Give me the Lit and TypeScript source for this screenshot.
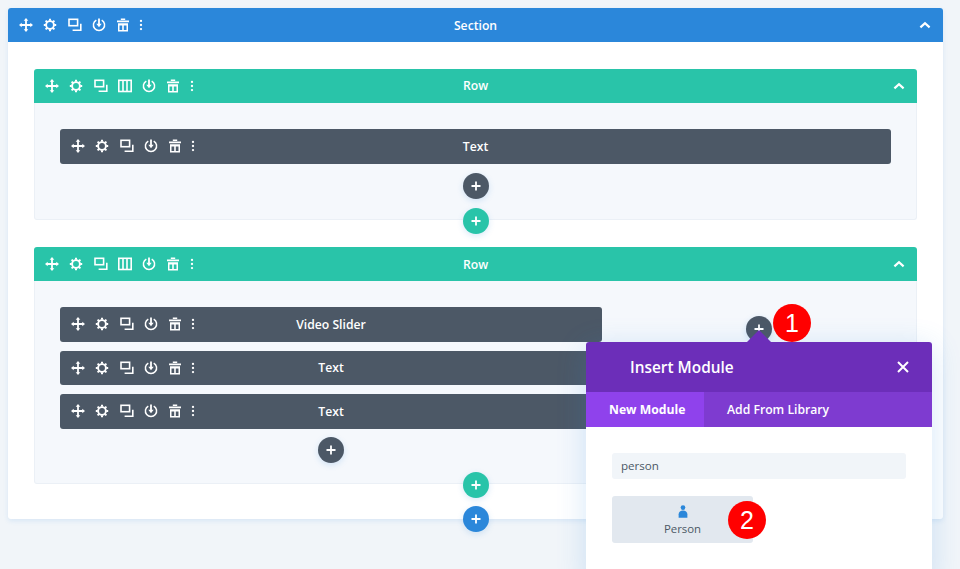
import { LitElement, html, css, svg } from "lit";
import { customElement } from "lit/decorators.js";

const paths: Record<string, unknown> = {
  move: svg`<path fill="currentColor" d="M7 0 9.3 2.7H7.9V6.1h3.4V4.7L14 7l-2.7 2.3V7.9H7.9v3.4h1.4L7 14l-2.3-2.7h1.4V7.9H2.7v1.4L0 7l2.7-2.3v1.4h3.4V2.7H4.7Z"/>`,
  gear: svg`<g stroke="currentColor" fill="none"><circle cx="7" cy="7" r="3.9" stroke-width="1.9"/><path stroke-width="2" d="M7 .8v2M7 11.2v2M.8 7h2M11.2 7h2M2.6 2.6l1.3 1.3M10.1 10.1l1.3 1.3M11.4 2.6l-1.3 1.3M3.9 10.1l-1.3 1.3"/></g>`,
  copy: svg`<g stroke="currentColor" fill="none" stroke-width="1.6"><rect x="1" y="1.3" width="8.6" height="6.4"/><path d="M4.6 12.2h8.2V5.8"/></g>`,
  cols: svg`<g stroke="currentColor" fill="none" stroke-width="1.6"><rect x=".8" y="1.3" width="12.4" height="11.2"/><path d="M5 1.3v11.2M9 1.3v11.2"/></g>`,
  power: svg`<g fill="none" stroke="currentColor" stroke-width="1.5"><path d="M4.3 2.1a5.6 5.6 0 1 0 5.4 0"/></g><path fill="currentColor" d="M6.1.6h1.8v5.2h1.8L7 9.2 4.3 5.8h1.8Z"/>`,
  trash: svg`<g fill="currentColor"><path d="M1 2.6h12v1.6H1ZM4.8.6h4.4v1.4H4.8Z"/><path fill-rule="evenodd" d="M2 5.2h10v8.2H2ZM3.5 7.6v4.4h2.7V7.6ZM7.8 7.6v4.4h2.7V7.6Z"/></g>`,
  dots: svg`<g fill="currentColor"><circle cx="7" cy="2.2" r="1.35"/><circle cx="7" cy="7" r="1.35"/><circle cx="7" cy="11.8" r="1.35"/></g>`,
};

const icon = (name: string) => html`<svg class="ic" viewBox="0 0 14 14" width="14" height="14">${paths[name]}</svg>`;

const plus = (cls: string) => html`<span class="plus ${cls}"><svg viewBox="0 0 12 12" width="12" height="12"><path d="M6 1.5v9M1.5 6h9" stroke="#fff" stroke-width="1.8" fill="none"/></svg></span>`;

@customElement("app-root")
export class AppRoot extends LitElement {
  static styles = css`
    :host { display: block; box-sizing: border-box; width: 960px; height: 569px; overflow: hidden; position: relative;
      background: #f1f5f9; padding: 8px 17px 0 8px; font-family: "Open Sans", "Noto Sans", sans-serif; }
    * { box-sizing: border-box; }
    .section { position: relative; height: 511px; background: #fff; border-radius: 3px; box-shadow: 0 2px 5px rgba(43,135,218,.12); }
    .bar { display: grid; grid-template-columns: 1fr auto 1fr; align-items: center; color: #fff; height: 34px; border-radius: 3px 3px 0 0; font-size: 12.2px; font-weight: 600; }
    .bar.blue { background: #2b87da; }
    .bar.green { background: #29c4a9; }
    .bar.dark { background: #4c5866; height: 34.6px; border-radius: 3px; }
    .tools { display: flex; align-items: center; padding-left: 6px; }
    .tool { width: 24.25px; display: flex; justify-content: center; align-items: center; }
    .tool.narrow { width: 12px; }
    .ic { display: block; }
    .chev { justify-self: end; margin-right: 12px; display: block; }
    .section-body { padding: 26.5px 26px 0; display: flex; flex-direction: column; gap: 27.5px; }
    .row { position: relative; }
    .row-body { background: #f5f8fc; border: 1px solid #ebf0f6; border-top: 0; padding: 26px 25px 21px; border-radius: 0 0 3px 3px; }
    .row-body.first { height: 117px; padding-top: 26.5px; }
    .row-body.second { height: 203px; }
    .col { display: flex; flex-direction: column; align-items: center; }
    .col .bar { width: 100%; }
    .col .bar + .bar { margin-top: 9px; }
    .grid { display: grid; grid-template-columns: 542px 264px; column-gap: 25px; }
    .plus { width: 26px; height: 26px; border-radius: 50%; display: flex; align-items: center; justify-content: center; flex: none;
      box-shadow: 0 2px 6px rgba(43,135,218,.18); }
    .plus.d { background: #4c5866; margin-top: 9px; }
    .plus.d.tight { margin-top: 8.4px; }
    .plus.g { background: #29c4a9; }
    .plus.b { background: #2b87da; }
    .edge { position: absolute; left: 50%; bottom: -14px; margin-left: -13px; z-index: 2; }
    .section > .edge { bottom: -13px; margin-left: -13px; }
    .popup { position: absolute; left: 586px; top: 342px; width: 346px; height: 240px; background: #fff; border-radius: 3px 3px 0 0; z-index: 5;
      box-shadow: 0 5px 30px rgba(43,135,218,.2); }
    .arrow { position: absolute; left: 161px; top: -12px; width: 0; height: 0; border-left: 12px solid transparent; border-right: 12px solid transparent; border-bottom: 12px solid #6c2eb9; }
    .head { height: 50px; background: #6c2eb9; color: #fff; font-size: 15.4px; font-weight: 600; display: flex; align-items: center; justify-content: space-between; padding: 0 23.5px 0 44px; border-radius: 3px 3px 0 0; }
    .head svg { display: block; }
    .tabs { height: 35px; background: #7e3bd0; display: flex; color: #fff; font-size: 12.2px; font-weight: 600; white-space: nowrap; }
    .tab { display: flex; align-items: center; padding: 0 23px; }
    .tab.on { background: #8f42ec; width: 118px; font-weight: 700; }
    .pbody { padding: 26px; }
    .search { height: 26px; background: #f1f5f9; border-radius: 3px; color: #4c5866; font-size: 11.6px; padding: 0 9px 1px; display: flex; align-items: center; }
    .tile { margin-top: 17px; width: 141px; height: 47px; background: #e2e8ef; border-radius: 3px; color: #4c5866; font-size: 11.4px; font-weight: 500; display: flex; flex-direction: column; align-items: center; padding-top: 9px; }
    .tile svg { display: block; margin-bottom: 3px; }
    .num { position: absolute; width: 38px; height: 38px; border-radius: 50%; background: #f00; color: #fff; z-index: 6;
      font-family: "Liberation Sans", Arial, sans-serif; font-size: 25px; display: flex; align-items: center; justify-content: center; }
    .n1 { left: 773px; top: 304px; }
    .n2 { left: 728px; top: 501px; }
  `;

  private bar(color: string, title: string, tools: string[]) {
    return html`<div class="bar ${color}">
      <div class="tools">${tools.map((t) => html`<span class="tool ${t === "dots" ? "narrow" : ""}">${icon(t)}</span>`)}</div>
      <span>${title}</span>
      ${color === "dark" ? html`<span></span>` : html`<svg class="chev" viewBox="0 0 12 8" width="12" height="8"><path d="M1.4 6.4 6 2.2l4.6 4.2" stroke="#fff" stroke-width="2.2" fill="none"/></svg>`}
    </div>`;
  }

  render() {
    const base = ["move", "gear", "copy", "power", "trash", "dots"];
    const rowT = ["move", "gear", "copy", "cols", "power", "trash", "dots"];
    return html`
      <div class="section">
        ${this.bar("blue", "Section", base)}
        <div class="section-body">
          <div class="row">
            ${this.bar("green", "Row", rowT)}
            <div class="row-body first">
              <div class="col">${this.bar("dark", "Text", base)}${plus("d")}</div>
            </div>
            ${plus("g edge")}
          </div>
          <div class="row">
            ${this.bar("green", "Row", rowT)}
            <div class="row-body second">
              <div class="grid">
                <div class="col">
                  ${this.bar("dark", "Video Slider", base)}
                  ${this.bar("dark", "Text", base)}
                  ${this.bar("dark", "Text", base)}
                  ${plus("d tight")}
                </div>
                <div class="col">${plus("d")}</div>
              </div>
            </div>
            ${plus("g edge")}
          </div>
        </div>
        ${plus("b edge")}
      </div>
      <div class="popup">
        <span class="arrow"></span>
        <div class="head"><span>Insert Module</span>
          <svg viewBox="0 0 12 12" width="12" height="12"><path d="M1 1l10 10M11 1 1 11" stroke="#fff" stroke-width="2" fill="none"/></svg></div>
        <div class="tabs"><span class="tab on">New Module</span><span class="tab">Add From Library</span></div>
        <div class="pbody">
          <div class="search">person</div>
          <div class="tile">
            <svg viewBox="0 0 10 14" width="10" height="13"><circle cx="5" cy="2.8" r="2.5" fill="#2b87da"/><path d="M.3 13.6V10a4.7 4.2 0 0 1 9.4 0v3.6Z" fill="#2b87da"/></svg>
            <span>Person</span>
          </div>
        </div>
      </div>
      <span class="num n1">1</span>
      <span class="num n2">2</span>
    `;
  }
}
